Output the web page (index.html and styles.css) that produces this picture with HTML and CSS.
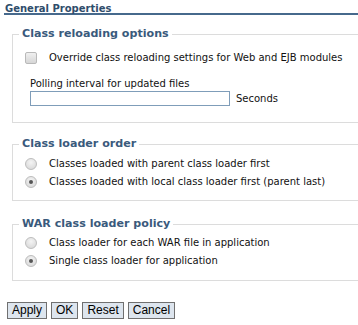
FILE: index.html
```html
<!DOCTYPE html>
<html>
<head>
<meta charset="utf-8">
<link rel="stylesheet" href="styles.css">
</head>
<body>
<div class="page">
  <div class="header">General Properties</div>

  <fieldset class="group g1">
    <legend>Class reloading options</legend>
    <div class="body">
      <label class="row first">
        <span class="check"></span>
        <span class="txt">Override class reloading settings for Web and EJB modules</span>
      </label>
      <div class="poll">
        <div class="plabel">Polling interval for updated files</div>
        <div class="prow">
          <span class="input"></span>
          <span class="txt">Seconds</span>
        </div>
      </div>
    </div>
  </fieldset>

  <fieldset class="group g2">
    <legend>Class loader order</legend>
    <div class="body">
      <label class="row first">
        <span class="radio"></span>
        <span class="txt">Classes loaded with parent class loader first</span>
      </label>
      <label class="row">
        <span class="radio on"></span>
        <span class="txt">Classes loaded with local class loader first (parent last)</span>
      </label>
    </div>
  </fieldset>

  <fieldset class="group g3">
    <legend>WAR class loader policy</legend>
    <div class="body">
      <label class="row first">
        <span class="radio"></span>
        <span class="txt">Class loader for each WAR file in application</span>
      </label>
      <label class="row">
        <span class="radio on"></span>
        <span class="txt">Single class loader for application</span>
      </label>
    </div>
  </fieldset>

  <div class="buttons">
    <span class="btn">Apply</span>
    <span class="btn">OK</span>
    <span class="btn">Reset</span>
    <span class="btn">Cancel</span>
  </div>
</div>
</body>
</html>
```
FILE: styles.css
```css
html, body {
  margin: 0;
  padding: 0;
  background: #ffffff;
  overflow: hidden;
}
.page {
  width: 358px;
  height: 325px;
  overflow: hidden;
  font-family: "DejaVu Sans", Verdana, sans-serif;
  font-size: 10px;
  color: #111;
}
.header {
  margin-left: 4px;
  padding: 3px 0 0 1px;
  height: 10px;
  line-height: 11px;
  font-weight: bold;
  font-size: 10px;
  color: #2f4d6b;
  border-bottom: 2px solid #46698c;
}
.group {
  box-sizing: border-box;
  margin: 0 -20px 0 12px;
  padding: 0;
  border: 1px solid #dcdcdc;
  min-width: 0;
}
.group legend {
  padding: 0 3px;
  margin-left: 6px;
  font-weight: bold;
  font-size: 11.1px;
  line-height: 14px;
  height: 14px;
  color: #3a5a7c;
}
.body {
  padding-left: 12px;
}
.g1 { margin-top: 12px; height: 96px; }
.g2 { margin-top: 14px; height: 64px; }
.g3 { margin-top: 16px; height: 64px; }
.row {
  display: flex;
  align-items: center;
  height: 18px;
}
.g1 .row.first { margin-top: 8px; }
.g2 .row.first { margin-top: 4px; }
.g3 .row.first { margin-top: 3px; }
.txt {
  line-height: 12px;
}
.check {
  box-sizing: border-box;
  width: 12px;
  height: 12px;
  border: 1px solid #b9b9b9;
  border-radius: 2px;
  background: linear-gradient(#f0f0f0, #d6d6d6);
  margin-right: 12px;
  flex: none;
}
.radio {
  box-sizing: border-box;
  width: 12px;
  height: 12px;
  border: 1px solid #bdbdbd;
  border-radius: 50%;
  background: radial-gradient(circle at 50% 35%, #f4f4f4, #d4d4d4);
  margin-right: 12px;
  flex: none;
  position: relative;
}
.radio.on::after {
  content: "";
  position: absolute;
  left: 3px;
  top: 3px;
  width: 4px;
  height: 4px;
  border-radius: 50%;
  background: #555;
}
.poll {
  margin-left: 5px;
  margin-top: 10px;
}
.plabel {
  line-height: 13px;
}
.prow {
  display: flex;
  align-items: center;
  margin-top: 1px;
}
.input {
  box-sizing: border-box;
  width: 200px;
  height: 15px;
  border: 1px solid #7f9db9;
  background: #fff;
  margin-right: 6px;
}
.buttons {
  display: flex;
  gap: 4px;
  margin: 21px 0 0 7px;
}
.btn {
  box-sizing: border-box;
  height: 17px;
  padding: 0 4px;
  border: 1px solid #707070;
  background: #dde5ee;
  font-family: "Liberation Sans", Arial, sans-serif;
  font-size: 12px;
  line-height: 15px;
  color: #000;
}
```
